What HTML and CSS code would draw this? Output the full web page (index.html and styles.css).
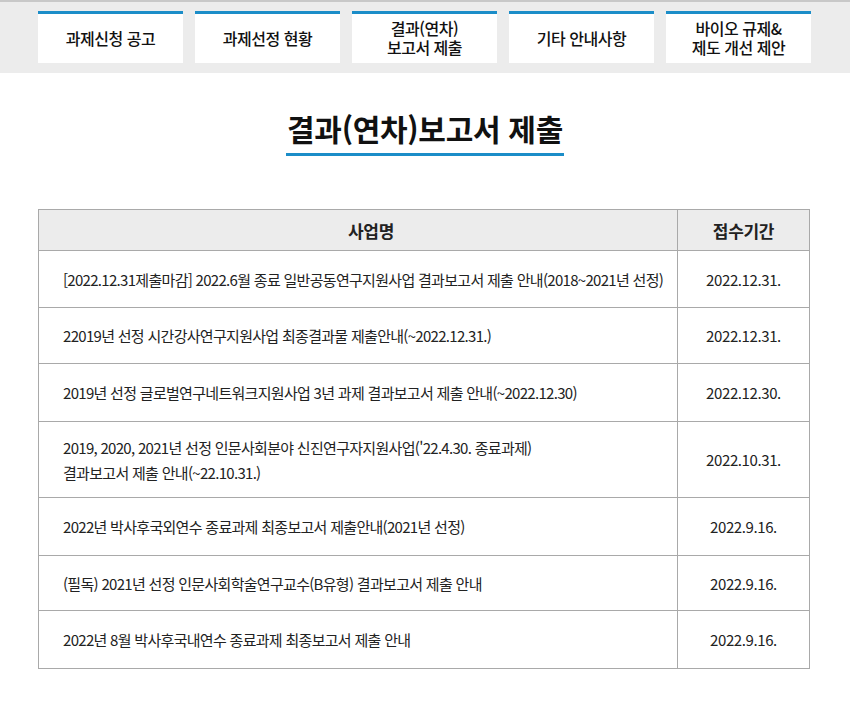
FILE: index.html
```html
<!DOCTYPE html>
<html lang="ko">
<head>
<meta charset="utf-8">
<link rel="stylesheet" href="styles.css">
</head>
<body>
<div class="topband">
  <nav class="tabs">
    <a class="tab">과제신청 공고</a>
    <a class="tab">과제선정 현황</a>
    <a class="tab"><span class="ln">결과(연차)</span><span class="ln">보고서 제출</span></a>
    <a class="tab">기타 안내사항</a>
    <a class="tab"><span class="ln">바이오 규제&amp;</span><span class="ln">제도 개선 제안</span></a>
  </nav>
</div>
<div class="titlewrap"><h1 class="title">결과(연차)보고서 제출</h1></div>
<table class="board">
  <thead>
    <tr><th class="c-name">사업명</th><th class="c-date">접수기간</th></tr>
  </thead>
  <tbody>
    <tr class="r1"><td class="name">[2022.12.31제출마감] 2022.6월 종료 일반공동연구지원사업 결과보고서 제출 안내(2018~2021년 선정)</td><td class="date">2022.12.31.</td></tr>
    <tr class="r2"><td class="name">22019년 선정 시간강사연구지원사업 최종결과물 제출안내(~2022.12.31.)</td><td class="date">2022.12.31.</td></tr>
    <tr class="r3"><td class="name">2019년 선정 글로벌연구네트워크지원사업 3년 과제 결과보고서 제출 안내(~2022.12.30)</td><td class="date">2022.12.30.</td></tr>
    <tr class="r4"><td class="name">2019, 2020, 2021년 선정 인문사회분야 신진연구자지원사업('22.4.30. 종료과제)<br>결과보고서 제출 안내(~22.10.31.)</td><td class="date">2022.10.31.</td></tr>
    <tr class="r5"><td class="name">2022년 박사후국외연수 종료과제 최종보고서 제출안내(2021년 선정)</td><td class="date">2022.9.16.</td></tr>
    <tr class="r6"><td class="name">(필독) 2021년 선정 인문사회학술연구교수(B유형) 결과보고서 제출 안내</td><td class="date">2022.9.16.</td></tr>
    <tr class="r7"><td class="name">2022년 8월 박사후국내연수 종료과제 최종보고서 제출 안내</td><td class="date">2022.9.16.</td></tr>
  </tbody>
</table>
</body>
</html>
```
FILE: styles.css
```css
* { box-sizing: border-box; }
body {
  margin: 0;
  background: #fff;
  font-family: "Noto Sans CJK KR", "Noto Sans", sans-serif;
  color: #222;
}
.topband {
  background: #ececec;
  border-top: 2px solid #c8c8c8;
  height: 73px;
  padding-top: 9px;
}
.tabs {
  display: flex;
  gap: 12px;
  margin-left: 38px;
}
.tab {
  width: 145px;
  height: 52px;
  background: #fff;
  border-top: 3px solid #1b8dc8;
  display: flex;
  flex-direction: column;
  align-items: center;
  justify-content: center;
  text-align: center;
  font-size: 16px;
  font-weight: 500;
  line-height: 20px;
  letter-spacing: -0.5px;
  color: #111;
  padding-bottom: 1px;
}
.ln { display: block; height: 19px; line-height: 19px; }
.titlewrap {
  display: flex;
  justify-content: center;
  margin-top: 35px;
}
.title {
  margin: 0;
  font-size: 30px;
  font-weight: 700;
  letter-spacing: -0.3px;
  line-height: 40px;
  color: #111;
  border-bottom: 3px solid #1b8dc8;
  padding: 0 1px 5px;
}
.board {
  margin: 53px 0 0 38px;
  width: 772px;
  border-collapse: collapse;
  font-size: 15px;
  letter-spacing: -0.7px;
}
.board th, .board td {
  border: 1px solid #a9a9a9;
}
.board th {
  background: #ececec;
  height: 41px;
  font-size: 17px;
  font-weight: 700;
  color: #222;
  letter-spacing: -0.3px;
  padding: 0;
}
.board th.c-name { padding-left: 26px; }
.c-name { width: 639px; }
.board td { height: 57px; padding: 0; line-height: 25px; color: #222; }
.board td.name { padding-left: 24px; text-align: left; }
.date { text-align: center; letter-spacing: -0.4px; }
.r2 td { height: 56px; }
.r3 td { height: 58px; }
.r4 td { height: 76px; }
.r5 td { height: 58px; }
.r6 td { height: 55px; }
.r7 td { height: 58px; }
```
